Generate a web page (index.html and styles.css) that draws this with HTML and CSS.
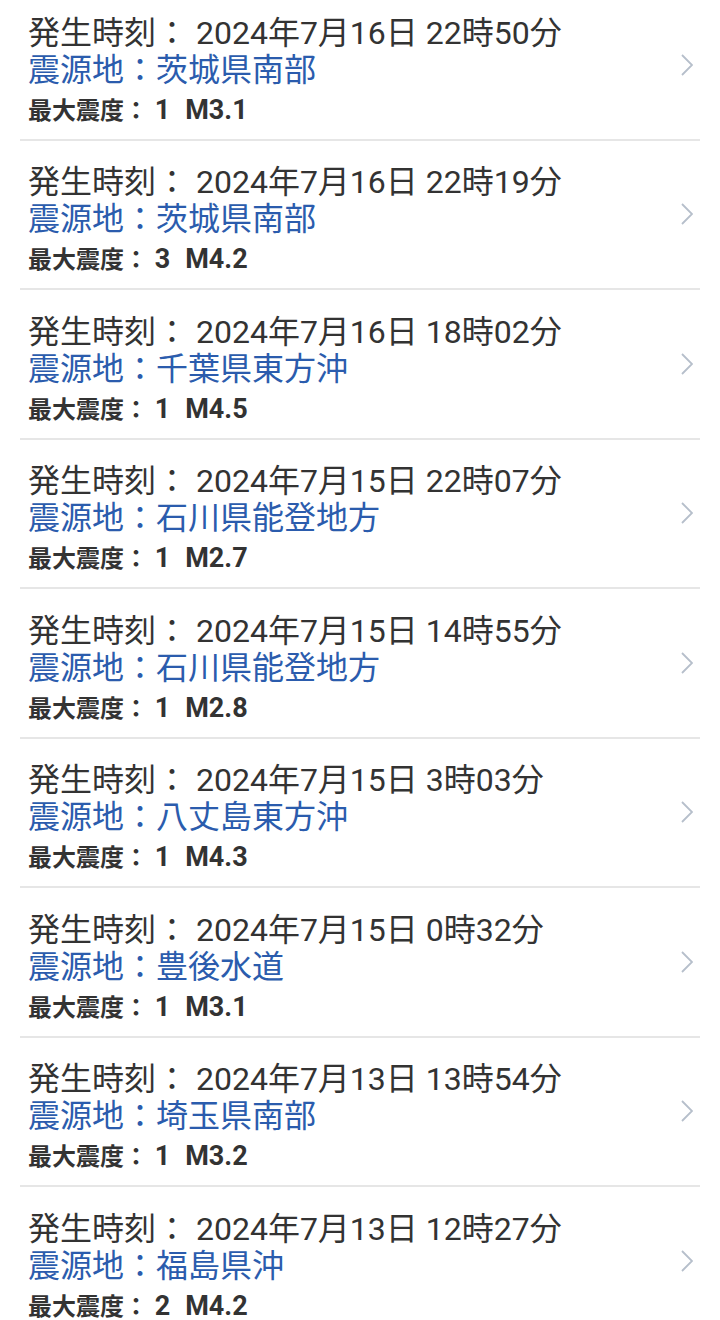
FILE: index.html
```html
<!DOCTYPE html>
<html lang="ja">
<head>
  <meta charset="UTF-8" />
  <meta name="viewport" content="width=device-width, initial-scale=1.0"/>
  <title>地震情報</title>
  <link rel="stylesheet" href="styles.css">
</head>
<body>
  <ul class="quake-list">
    <li class="quake">
      <div class="info">
        <div class="time">発生時刻： 2024年7月16日 22時50分</div>
        <div class="place">震源地：茨城県南部</div>
        <div class="scale">最大震度：<span class="value"> 1<span class="mag">M3.1</span></span></div>
      </div>
      <svg class="chevron" viewBox="0 0 12 22"><path d="M1 1 L11 11 L1 21" /></svg>
    </li>
    <li class="quake">
      <div class="info">
        <div class="time">発生時刻： 2024年7月16日 22時19分</div>
        <div class="place">震源地：茨城県南部</div>
        <div class="scale">最大震度：<span class="value"> 3<span class="mag">M4.2</span></span></div>
      </div>
      <svg class="chevron" viewBox="0 0 12 22"><path d="M1 1 L11 11 L1 21" /></svg>
    </li>
    <li class="quake">
      <div class="info">
        <div class="time">発生時刻： 2024年7月16日 18時02分</div>
        <div class="place">震源地：千葉県東方沖</div>
        <div class="scale">最大震度：<span class="value"> 1<span class="mag">M4.5</span></span></div>
      </div>
      <svg class="chevron" viewBox="0 0 12 22"><path d="M1 1 L11 11 L1 21" /></svg>
    </li>
    <li class="quake">
      <div class="info">
        <div class="time">発生時刻： 2024年7月15日 22時07分</div>
        <div class="place">震源地：石川県能登地方</div>
        <div class="scale">最大震度：<span class="value"> 1<span class="mag">M2.7</span></span></div>
      </div>
      <svg class="chevron" viewBox="0 0 12 22"><path d="M1 1 L11 11 L1 21" /></svg>
    </li>
    <li class="quake">
      <div class="info">
        <div class="time">発生時刻： 2024年7月15日 14時55分</div>
        <div class="place">震源地：石川県能登地方</div>
        <div class="scale">最大震度：<span class="value"> 1<span class="mag">M2.8</span></span></div>
      </div>
      <svg class="chevron" viewBox="0 0 12 22"><path d="M1 1 L11 11 L1 21" /></svg>
    </li>
    <li class="quake">
      <div class="info">
        <div class="time">発生時刻： 2024年7月15日 3時03分</div>
        <div class="place">震源地：八丈島東方沖</div>
        <div class="scale">最大震度：<span class="value"> 1<span class="mag">M4.3</span></span></div>
      </div>
      <svg class="chevron" viewBox="0 0 12 22"><path d="M1 1 L11 11 L1 21" /></svg>
    </li>
    <li class="quake">
      <div class="info">
        <div class="time">発生時刻： 2024年7月15日 0時32分</div>
        <div class="place">震源地：豊後水道</div>
        <div class="scale">最大震度：<span class="value"> 1<span class="mag">M3.1</span></span></div>
      </div>
      <svg class="chevron" viewBox="0 0 12 22"><path d="M1 1 L11 11 L1 21" /></svg>
    </li>
    <li class="quake">
      <div class="info">
        <div class="time">発生時刻： 2024年7月13日 13時54分</div>
        <div class="place">震源地：埼玉県南部</div>
        <div class="scale">最大震度：<span class="value"> 1<span class="mag">M3.2</span></span></div>
      </div>
      <svg class="chevron" viewBox="0 0 12 22"><path d="M1 1 L11 11 L1 21" /></svg>
    </li>
    <li class="quake">
      <div class="info">
        <div class="time">発生時刻： 2024年7月13日 12時27分</div>
        <div class="place">震源地：福島県沖</div>
        <div class="scale">最大震度：<span class="value"> 2<span class="mag">M4.2</span></span></div>
      </div>
      <svg class="chevron" viewBox="0 0 12 22"><path d="M1 1 L11 11 L1 21" /></svg>
    </li>
  </ul>
</body>
</html>
```

FILE: styles.css
```css
body {
  margin: 0;
  background: #fff;
  font-family: Roboto, "Noto Sans CJK JP", sans-serif;
  color: #333;
  overflow: hidden;
}

.quake-list {
  list-style: none;
  margin: -9px 0 0;
  padding: 0 20px;
}

/* one earthquake row */
.quake {
  display: flex;
  align-items: center;
  border-bottom: 2px solid #e6e6e6;
}

.info {
  flex: 1;
  padding: 23.5px 0 14px 8px;
}

.time {
  font-size: 32px;
  line-height: 37px;
}

.place {
  font-size: 32px;
  line-height: 37px;
  color: #2b5cad;
}

.scale {
  height: 28px;
  margin-top: 8px;
  font-size: 24px;
  line-height: 28px;
  font-weight: bold;
}

.value {
  font-size: 27px;
  line-height: 1;
}

.mag {
  margin-left: 15px;
}

.chevron {
  width: 12px;
  height: 22px;
  margin-right: 7px;
  fill: none;
  stroke: #b6bfcb;
  stroke-width: 1.8;
}
```
